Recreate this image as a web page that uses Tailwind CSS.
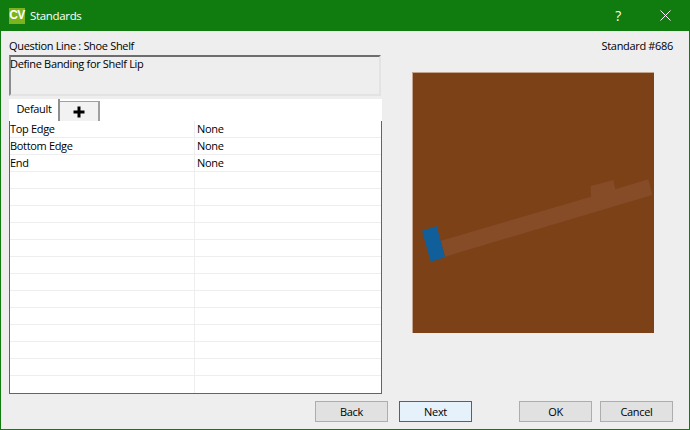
<!DOCTYPE html>
<html lang="en">
<head>
    <meta charset="UTF-8">
    <title>Standards</title>
    <script src="https://cdn.jsdelivr.net/npm/@tailwindcss/browser@4"></script>
</head>
<body class="bg-[#eeeeee]">
    <div class="w-[690px] h-[430px] flex flex-col overflow-hidden bg-[#eeeeee] border-x border-b border-[#107c10] font-['Open_Sans','Noto_Sans',sans-serif] text-[11px] tracking-[-0.33px] leading-[17px] text-black">
        <!-- Title bar -->
        <header class="h-[31px] -mx-px bg-[#107c10] flex items-center shrink-0">
            <div class="w-[16px] h-[16px] ml-[9px] bg-[#7ab51d] text-white text-[12px] font-bold flex items-center justify-center tracking-[-0.5px] font-['Liberation_Sans',sans-serif]">CV</div>
            <div class="ml-[5px] text-white text-[11.5px]">Standards</div>
            <div class="ml-auto mr-[39px] text-white text-[14px]">?</div>
            <svg class="mr-[19px]" width="11" height="11" viewBox="0 0 11 11" fill="none" stroke="#ffffff" stroke-width="1">
                <path d="M0.5 0.5L10.5 10.5M10.5 0.5L0.5 10.5"></path>
            </svg>
        </header>

        <!-- Main -->
        <div class="flex flex-1 min-h-0">
            <div class="w-[373px] ml-[8px] shrink-0">
                <div class="mt-[6px] h-[17px]">Question Line : Shoe Shelf</div>
                <div class="h-[41px] mt-[1px] w-[372px] border-2 border-[#e3e3e3] border-t-[#6d6d6d] border-l-[#8a8a8a] bg-[#eeeeee] leading-[14px] indent-[-1px]">Define Banding for Shelf Lip</div>

                <!-- Tabs -->
                <div class="mt-[3px] h-[22px] bg-white flex items-end">
                    <div class="h-[22px] w-[50px] ml-[1px] bg-white border-r-2 border-[#8f8f8f] flex items-center justify-center pb-[3px]">Default</div>
                    <div class="h-[20px] w-[40px] bg-[#f2f2f2] border-r-2 border-t border-[#a0a0a0] flex items-center justify-center">
                        <svg width="12" height="12" viewBox="0 0 12 12" fill="#000000"><path d="M4.5 0.5H7.5V4.5H11.5V7.5H7.5V11.5H4.5V7.5H0.5V4.5H4.5Z"></path></svg>
                    </div>
                </div>

                <!-- Grid -->
                <div class="h-[273px] bg-white border-l border-r border-b border-[#646464] overflow-hidden grid grid-cols-[185px_1fr] auto-rows-[17px] border-t-0 leading-[16px]">
                    <div class="border-r border-b border-[#eeeeee]">Top Edge</div><div class="border-b border-[#eeeeee] pl-[2px]">None</div>
                    <div class="border-r border-b border-[#eeeeee]">Bottom Edge</div><div class="border-b border-[#eeeeee] pl-[2px]">None</div>
                    <div class="border-r border-b border-[#eeeeee]">End</div><div class="border-b border-[#eeeeee] pl-[2px]">None</div>
                    <div class="border-r border-b border-[#eeeeee]"></div><div class="border-b border-[#eeeeee]"></div>
                    <div class="border-r border-b border-[#eeeeee]"></div><div class="border-b border-[#eeeeee]"></div>
                    <div class="border-r border-b border-[#eeeeee]"></div><div class="border-b border-[#eeeeee]"></div>
                    <div class="border-r border-b border-[#eeeeee]"></div><div class="border-b border-[#eeeeee]"></div>
                    <div class="border-r border-b border-[#eeeeee]"></div><div class="border-b border-[#eeeeee]"></div>
                    <div class="border-r border-b border-[#eeeeee]"></div><div class="border-b border-[#eeeeee]"></div>
                    <div class="border-r border-b border-[#eeeeee]"></div><div class="border-b border-[#eeeeee]"></div>
                    <div class="border-r border-b border-[#eeeeee]"></div><div class="border-b border-[#eeeeee]"></div>
                    <div class="border-r border-b border-[#eeeeee]"></div><div class="border-b border-[#eeeeee]"></div>
                    <div class="border-r border-b border-[#eeeeee]"></div><div class="border-b border-[#eeeeee]"></div>
                    <div class="border-r border-b border-[#eeeeee]"></div><div class="border-b border-[#eeeeee]"></div>
                    <div class="border-r border-b border-[#eeeeee]"></div><div class="border-b border-[#eeeeee]"></div>
                    <div class="border-r border-[#eeeeee]"></div><div></div>
                </div>
            </div>

            <!-- Preview -->
            <div class="ml-[30px] w-[261px] shrink-0">
                <div class="mt-[6px] h-[17px] text-right">Standard #686</div>
                <svg class="mt-[18px] block" width="242" height="261" viewBox="0 0 242 261">
                    <rect x="0" y="0" width="242" height="261" fill="#c4a68e"></rect>
                    <rect x="1" y="1" width="241" height="260" fill="#7c4116"></rect>
                    <polygon points="29,168.7 179,124.7 178.7,114 201.3,108 203.3,117.3 236.3,107.3 240.3,123 33,184.7" fill="#864c28"></polygon>
                    <polygon points="10,158.7 24.7,154 33,185.3 18.7,189.7" fill="#115f9a"></polygon>
                </svg>
            </div>
        </div>

        <!-- Buttons -->
        <footer class="h-[28px] flex items-start shrink-0">
            <button class="ml-[314px] w-[73px] h-[21px] bg-[#e1e1e1] border border-[#adadad] leading-[18px]">Back</button>
            <button class="ml-[11px] w-[73px] h-[21px] bg-[#e5f1fb] border border-[#0078d7] leading-[18px]">Next</button>
            <button class="ml-[47px] w-[73px] h-[21px] bg-[#e1e1e1] border border-[#adadad] leading-[18px]">OK</button>
            <button class="ml-[8px] w-[73px] h-[21px] bg-[#e1e1e1] border border-[#adadad] leading-[18px]">Cancel</button>
        </footer>
    </div>
</body>
</html>
